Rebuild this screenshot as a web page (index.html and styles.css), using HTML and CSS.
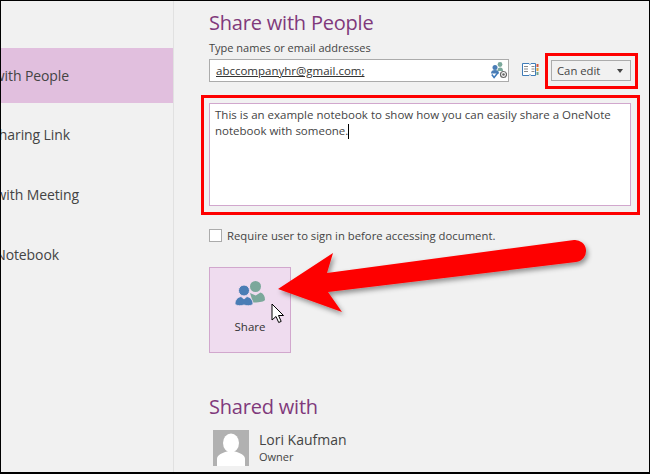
FILE: index.html
```html
<!DOCTYPE html>
<html lang="en">
<head>
<meta charset="utf-8">
<title>Share with People</title>
<link rel="stylesheet" href="styles.css">
</head>
<body>
<div class="frame">
  <nav class="sidebar">
    <div class="nav-item active"><span>Share with People</span></div>
    <div class="nav-item"><span>Get a Sharing Link</span></div>
    <div class="nav-item"><span>Share with Meeting</span></div>
    <div class="nav-item"><span>Move Notebook</span></div>
  </nav>
  <main class="main">
    <h1 class="heading">Share with People</h1>
    <div class="field-label">Type names or email addresses</div>
    <div class="invite-row">
      <div class="invite-input">
        <span class="email">abccompanyhr@gmail.com;</span>
        <svg class="check-icon" width="16" height="17" viewBox="0 0 16 17">
          <circle cx="9" cy="2.500" r="2.400" fill="#7ba89b"/>
          <path d="M6.500 9c0-2.500 1-3.500 2.700-3.500s2.800 1 2.800 3.500z" fill="#7ba89b"/>
          <circle cx="4" cy="5.500" r="2.500" fill="#4a7db5"/>
          <path d="M0 11.500c0-2.500 1.500-3.500 4-3.500s4 1 4 3.500z" fill="#4a7db5"/>
          <path d="M.8 12.500l2.300 3 4-5" fill="none" stroke="#3c78b8" stroke-width="1.500"/>
          <circle cx="12.500" cy="12.500" r="3" fill="none" stroke="#666" stroke-width="1.200"/>
          <circle cx="12.500" cy="12.500" r="1.300" fill="#666"/>
        </svg>
      </div>
      <svg class="book-icon" width="17" height="13" viewBox="0 0 17 13">
        <path d="M0.500 0.500h6.500l1 1 1-1h4.500v12h-4.500l-1-1-1 1h-6.500z" fill="#fff" stroke="#3f7cb8"/>
        <path d="M2 3.500h4M2 6h4M2 8.500h4M9.500 3.500h3M9.500 6h3M9.500 8.500h3" stroke="#8a8a8a"/>
        <rect x="14.500" y="1" width="2" height="3" fill="#d2563c"/>
        <rect x="14.500" y="5" width="2" height="3" fill="#e3a33b"/>
        <rect x="14.500" y="9" width="2" height="3" fill="#6fa58f"/>
      </svg>
      <div class="select-wrap">
        <div class="select"><span>Can edit</span><i class="caret"></i></div>
      </div>
    </div>
    <div class="message-wrap">
      <div class="message">This is an example notebook to show how you can easily share a OneNote notebook with someone.<span class="text-cursor"></span></div>
    </div>
    <label class="signin"><span class="checkbox"></span><span>Require user to sign in before accessing document.</span></label>
    <button class="share-btn" type="button">
      <svg width="30" height="25" viewBox="0 0 30 25">
        <circle cx="20.500" cy="5.500" r="5.500" fill="#7ba89b"/>
        <path d="M15 12l5.700 2.500 4.800-3c3 1 4.500 3.500 4.500 7.500-1 1.500-5 2.500-12 2.500z" fill="#7ba89b"/>
        <circle cx="9" cy="9.500" r="5.500" fill="#4a7db5" stroke="#efdcef" stroke-width="1"/>
        <path d="M0 23.500c0-5 2.500-7 6-8l3 2.500 3-2.500c3.500 1 6 3 6 8-3 1.500-6 1.500-9 .5-3 1-6 1-9-.5z" fill="#4a7db5" stroke="#efdcef" stroke-width=".8"/>
      </svg>
      <span>Share</span>
    </button>
    <h2 class="heading shared-heading">Shared with</h2>
    <div class="person">
      <svg class="avatar" width="36" height="36" viewBox="0 0 36 36">
        <rect width="36" height="36" fill="#b1b1b1"/>
        <ellipse cx="18" cy="13" rx="8" ry="9.500" fill="#fff"/>
        <path d="M4 36v-7c0-4 5-6 10-7.500h8c5 1.500 10 3.500 10 7.500v7z" fill="#fff"/>
      </svg>
      <div class="person-text">
        <div class="person-name">Lori Kaufman</div>
        <div class="person-role">Owner</div>
      </div>
    </div>
  </main>
  <svg class="arrow" width="650" height="474" viewBox="0 0 650 474">
    <defs>
      <filter id="arrow-shadow" x="-10%" y="-30%" width="120%" height="160%">
        <feDropShadow dx="2" dy="3" stdDeviation="2.500" flood-color="#000" flood-opacity=".4"/>
      </filter>
    </defs>
    <path d="M278 289L333 253L327 273L574 240A11 11 0 0 1 576 262L328 292L342 312Z" fill="#fe0000" filter="url(#arrow-shadow)"/>
  </svg>
  <svg class="cursor" width="14" height="22" viewBox="0 0 14 22">
    <path d="M1 1v16l4-3.500 2.700 6 2.500-1.100-2.700-5.900h5z" fill="#fff" stroke="#000"/>
  </svg>
</div>
</body>
</html>
```
FILE: styles.css
```css
* { box-sizing: border-box; }
html, body { margin: 0; padding: 0; }
body {
  width: 650px;
  height: 474px;
  overflow: hidden;
  background: #fff;
  font-family: "Open Sans", "Noto Sans", sans-serif;
  color: #444;
}
.frame {
  position: relative;
  width: 650px;
  height: 474px;
  background: #f1f1f1;
  border-top: 1px solid #000;
  border-left: 1px solid #000;
  border-right: 1px solid #000;
  border-bottom: 2px solid #000;
  display: flex;
  overflow: hidden;
}
.sidebar {
  width: 173px;
  flex: none;
  padding-top: 47px;
  border-right: 1px solid #e1e1e1;
  overflow: hidden;
}
.nav-item {
  height: 60px;
  display: flex;
  align-items: center;
  justify-content: flex-end;
  font-size: 14px;
  letter-spacing: -.1px;
  color: #444;
  white-space: nowrap;
}
.nav-item span { flex: none; }
.nav-item.active { height: 55px; margin-bottom: 1px; background: #e1bfde; }
.nav-item:nth-child(1) { padding-right: 104px; }
.nav-item:nth-child(2) { padding-right: 103px; }
.nav-item:nth-child(3) { padding-right: 94px; }
.nav-item:nth-child(4) { padding-right: 114px; }
.main {
  flex: 1;
  min-width: 0;
  padding: 8px 0 0 35px;
}
.heading {
  margin: 0;
  font-size: 20px;
  font-weight: 400;
  line-height: 28px;
  letter-spacing: -.2px;
  color: #80397b;
}
.field-label {
  margin-top: 3px;
  font-size: 11px;
  line-height: 16px;
  color: #444;
}
.invite-row {
  display: flex;
  align-items: center;
  height: 23px;
  margin-top: 3px;
}
.invite-input {
  width: 300px;
  height: 23px;
  background: #fff;
  border: 1px solid #ababab;
  padding-left: 6px;
  display: flex;
  align-items: center;
  justify-content: space-between;
  font-size: 11.500px;
  color: #333;
}
.email { text-decoration: underline; }
.check-icon { margin-right: 1px; }
.book-icon { margin: 0 0 2px 13px; }
.select-wrap {
  flex: none;
  margin: 1px 0 0 6px;
  padding: 7px 7px 7px 6px;
  width: 93px;
  height: 36px;
  outline: 3px solid #fe0000;
  outline-offset: -3px;
  display: flex;
}
.select {
  width: 80px;
  height: 21px;
  background: #f1f1f1;
  border: 1px solid #ababab;
  display: flex;
  align-items: center;
  justify-content: space-between;
  padding: 0 6px 0 5px;
  font-size: 11.300px;
  color: #444;
}
.caret {
  width: 0;
  height: 0;
  border-left: 3.500px solid transparent;
  border-right: 3.500px solid transparent;
  border-top: 4px solid #444;
  margin-right: 1px;
}
.message-wrap {
  width: 439px;
  height: 120px;
  margin: 13px 0 0 -8px;
  border: 3px solid #fe0000;
  padding: 5px 6px 6px 5px;
}
.message {
  width: 422px;
  height: 103px;
  background: #fff;
  border: 1px solid #d1a7cd;
  padding: 3px 5px;
  font-size: 11.500px;
  line-height: 16px;
  color: #444;
}
.text-cursor {
  display: inline-block;
  width: 1px;
  height: 15px;
  background: #000;
  vertical-align: -4px;
}
.signin {
  display: flex;
  align-items: center;
  gap: 5px;
  margin-top: 13px;
  height: 14px;
  font-size: 11.300px;
  color: #444;
}
.checkbox {
  width: 13px;
  height: 13px;
  background: #fff;
  border: 1px solid #ababab;
}
.share-btn {
  display: flex;
  flex-direction: column;
  align-items: center;
  width: 82px;
  height: 86px;
  margin-top: 25px;
  padding: 13px 0 0;
  background: #efdcef;
  border: 1px solid #d1a7cd;
  font: inherit;
  font-size: 11.500px;
  color: #333;
}
.share-btn span { margin-top: 13px; }
.shared-heading { margin-top: 40px; }
.person {
  display: flex;
  gap: 10px;
  margin: 9px 0 0 4px;
}
.avatar { flex: none; }
.person-name { font-size: 14px; line-height: 19px; color: #444; }
.person-role { font-size: 11px; line-height: 15px; color: #444; }
.arrow { position: absolute; left: -1px; top: -1px; pointer-events: none; }
.cursor { position: absolute; left: 270px; top: 302px; }
```
